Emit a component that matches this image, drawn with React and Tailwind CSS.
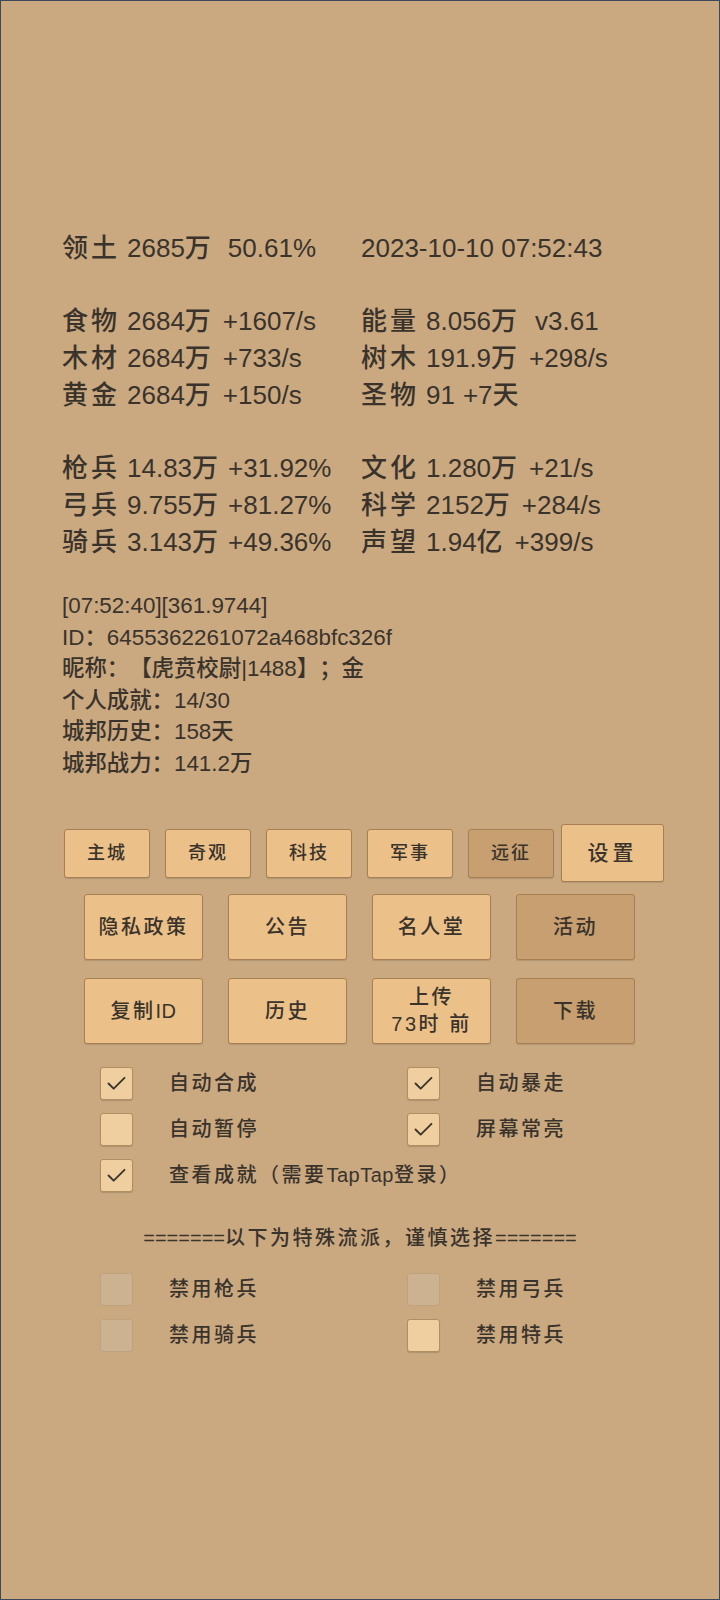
import React from 'react';

const FONT = { fontFamily: '"Liberation Sans", "Noto Sans CJK SC", sans-serif' };

function Stat({ label, value, extra, gap = 'ml-[12px]' }) {
    return (
        <div className="flex items-center">
            <span className="inline-block w-[65px] tracking-[3px]">{label}</span>
            <span>{value}</span>
            {extra && <span className={gap}>{extra}</span>}
        </div>
    );
}

function Row({ left, right }) {
    return (
        <div className="flex h-[37px] items-center">
            <div className="w-[299px]">{left}</div>
            <div>{right}</div>
        </div>
    );
}

function Check({ checked, disabled }) {
    if (disabled) {
        return (
            <div className="w-[33px] h-[33px] rounded-[3px] border border-[#bfa37f] bg-[#ccb290]" />
        );
    }
    return (
        <div className="w-[33px] h-[33px] rounded-[3px] border border-[#b38c62] bg-[#efcf9f] flex items-center justify-center shadow-[0_1px_1px_rgba(0,0,0,0.15)]">
            {checked && (
                <svg width="33" height="33" viewBox="0 0 33 33" fill="none">
                    <path d="M8 16.5 L13.5 22 L25 10.5" stroke="#3b352d" strokeWidth="2" strokeLinecap="round" strokeLinejoin="round" />
                </svg>
            )}
        </div>
    );
}

function Option({ label, checked, disabled }) {
    return (
        <div className="flex items-center w-[307px] h-[46px]">
            <Check checked={checked} disabled={disabled} />
            <span className="ml-[36px] text-[20px] tracking-[2.5px]">{label}</span>
        </div>
    );
}

function Btn({ children, dark, className }) {
    return (
        <button
            type="button"
            className={
                'flex items-center justify-center rounded-[3px] border border-[#a67f55] shadow-[0_1px_1px_rgba(0,0,0,0.12)] ' +
                (dark ? 'bg-[#c79f70] ' : 'bg-[#ebc089] ') +
                className
            }
        >
            {children}
        </button>
    );
}

export default function App() {
    return (
        <div
            style={FONT}
            className="w-[720px] h-[1600px] bg-[#caa981] border border-[#3b4a5c] text-[#3a332b] font-medium overflow-hidden [text-spacing-trim:space-all]"
        >
            {/* stats */}
            <div className="pt-[229px] pl-[61px] text-[26px]">
                <Row
                    left={<Stat label="领土" value="2685万" extra="50.61%" gap="ml-[17px]" />}
                    right={<span>2023-10-10 07:52:43</span>}
                />
                <div className="h-[36px]" />
                <Row
                    left={<Stat label="食物" value="2684万" extra="+1607/s" />}
                    right={<Stat label="能量" value="8.056万" extra="v3.61" gap="ml-[18px]" />}
                />
                <Row
                    left={<Stat label="木材" value="2684万" extra="+733/s" />}
                    right={<Stat label="树木" value="191.9万" extra="+298/s" />}
                />
                <Row
                    left={<Stat label="黄金" value="2684万" extra="+150/s" />}
                    right={<Stat label="圣物" value="91" extra="+7天" gap="ml-[8px]" />}
                />
                <div className="h-[36px]" />
                <Row
                    left={<Stat label="枪兵" value="14.83万" extra="+31.92%" gap="ml-[10px]" />}
                    right={<Stat label="文化" value="1.280万" extra="+21/s" />}
                />
                <Row
                    left={<Stat label="弓兵" value="9.755万" extra="+81.27%" gap="ml-[10px]" />}
                    right={<Stat label="科学" value="2152万" extra="+284/s" />}
                />
                <Row
                    left={<Stat label="骑兵" value="3.143万" extra="+49.36%" gap="ml-[10px]" />}
                    right={<Stat label="声望" value="1.94亿" extra="+399/s" />}
                />
            </div>

            {/* info */}
            <div className="mt-[29px] pl-[61px] text-[22.4px] leading-[31.5px]">
                <div>[07:52:40][361.9744]</div>
                <div>ID：6455362261072a468bfc326f</div>
                <div>
                    昵称：【虎贲校尉
                    <span style={{ fontFamily: '"Liberation Sans", sans-serif' }}>|1488</span>
                    】；金
                </div>
                <div>个人成就：14/30</div>
                <div>城邦历史：158天</div>
                <div>城邦战力：141.2万</div>
            </div>

            {/* buttons */}
            <div className="mt-[45px] pl-[63px] flex items-center h-[58px]">
                <div className="flex gap-[15px] text-[18px] tracking-[2px]">
                    <Btn className="w-[86px] h-[49px]">主城</Btn>
                    <Btn className="w-[86px] h-[49px]">奇观</Btn>
                    <Btn className="w-[86px] h-[49px]">科技</Btn>
                    <Btn className="w-[86px] h-[49px]">军事</Btn>
                    <Btn dark className="w-[86px] h-[49px]">远征</Btn>
                </div>
                <Btn className="ml-[7px] w-[103px] h-[58px] text-[21px] tracking-[4px]">设置</Btn>
            </div>

            <div className="mt-[12px] pl-[83px] flex gap-[25px] text-[20px] tracking-[2.5px]">
                <Btn className="w-[119px] h-[66px]">隐私政策</Btn>
                <Btn className="w-[119px] h-[66px]">公告</Btn>
                <Btn className="w-[119px] h-[66px]">名人堂</Btn>
                <Btn dark className="w-[119px] h-[66px]">活动</Btn>
            </div>

            <div className="mt-[18px] pl-[83px] flex gap-[25px] text-[20px] tracking-[2.5px]">
                <Btn className="w-[119px] h-[66px]">
                    <span>复制</span>
                    <span className="tracking-[0.5px]">ID</span>
                </Btn>
                <Btn className="w-[119px] h-[66px]">历史</Btn>
                <Btn className="w-[119px] h-[66px] flex-col leading-[27px]">
                    <span>上传</span>
                    <span>73时 前</span>
                </Btn>
                <Btn dark className="w-[119px] h-[66px]">下载</Btn>
            </div>

            {/* options */}
            <div className="mt-[16px] pl-[99px]">
                <div className="flex">
                    <Option label="自动合成" checked />
                    <Option label="自动暴走" checked />
                </div>
                <div className="flex">
                    <Option label="自动暂停" />
                    <Option label="屏幕常亮" checked />
                </div>
                <div className="flex items-center h-[46px]">
                    <Check checked />
                    <span className="ml-[36px] text-[20px] tracking-[2.5px]">
                        查看成就（需要<span className="tracking-[0.5px]">TapTap</span>登录）
                    </span>
                </div>
            </div>

            <div className="mt-[25px] h-[30px] flex items-center justify-center text-[20px]">
                <span>=======</span>
                <span className="tracking-[2.5px]">以下为特殊流派，谨慎选择</span>
                <span>=======</span>
            </div>

            <div className="mt-[13px] pl-[99px]">
                <div className="flex">
                    <Option label="禁用枪兵" disabled />
                    <Option label="禁用弓兵" disabled />
                </div>
                <div className="flex">
                    <Option label="禁用骑兵" disabled />
                    <Option label="禁用特兵" />
                </div>
            </div>
        </div>
    );
}
